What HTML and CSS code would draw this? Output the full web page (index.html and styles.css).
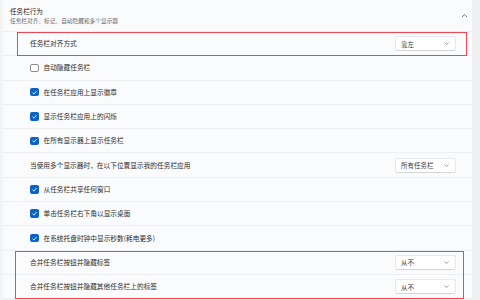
FILE: index.html
```html
<!DOCTYPE html>
<html lang="zh-CN">
<head>
<meta charset="utf-8">
<link rel="stylesheet" href="styles.css">
</head>
<body>
<div class="page">
  <div class="panel">
    <div class="header">
      <div class="htext">
        <div class="title">任务栏行为</div>
        <div class="sub">任务栏对齐、标记、自动隐藏和多个显示器</div>
      </div>
      <svg class="chev-up" width="7" height="5" viewBox="0 0 7 5"><path d="M1 4 L3.5 1.5 L6 4" fill="none" stroke="#555" stroke-width="0.8"/></svg>
    </div>
    <div class="row"><span class="label">任务栏对齐方式</span><div class="select"><span>靠左</span><svg class="chev" width="5" height="3" viewBox="0 0 5 3"><path d="M0.5 0.5 L2.5 2.5 L4.5 0.5" fill="none" stroke="#777" stroke-width="0.7"/></svg></div></div>
    <div class="row"><span class="cb"></span><span class="label">自动隐藏任务栏</span></div>
    <div class="row"><span class="cb on"><svg width="7" height="7" viewBox="0 0 7 7"><path d="M1.5 3.7 L3 5.1 L5.6 2" fill="none" stroke="#fff" stroke-width="0.8"/></svg></span><span class="label">在任务栏应用上显示徽章</span></div>
    <div class="row"><span class="cb on"><svg width="7" height="7" viewBox="0 0 7 7"><path d="M1.5 3.7 L3 5.1 L5.6 2" fill="none" stroke="#fff" stroke-width="0.8"/></svg></span><span class="label">显示任务栏应用上的闪烁</span></div>
    <div class="row"><span class="cb on"><svg width="7" height="7" viewBox="0 0 7 7"><path d="M1.5 3.7 L3 5.1 L5.6 2" fill="none" stroke="#fff" stroke-width="0.8"/></svg></span><span class="label">在所有显示器上显示任务栏</span></div>
    <div class="row"><span class="label">当使用多个显示器时，在以下位置显示我的任务栏应用</span><div class="select"><span>所有任务栏</span><svg class="chev" width="5" height="3" viewBox="0 0 5 3"><path d="M0.5 0.5 L2.5 2.5 L4.5 0.5" fill="none" stroke="#777" stroke-width="0.7"/></svg></div></div>
    <div class="row"><span class="cb on"><svg width="7" height="7" viewBox="0 0 7 7"><path d="M1.5 3.7 L3 5.1 L5.6 2" fill="none" stroke="#fff" stroke-width="0.8"/></svg></span><span class="label">从任务栏共享任何窗口</span></div>
    <div class="row"><span class="cb on"><svg width="7" height="7" viewBox="0 0 7 7"><path d="M1.5 3.7 L3 5.1 L5.6 2" fill="none" stroke="#fff" stroke-width="0.8"/></svg></span><span class="label">单击任务栏右下角以显示桌面</span></div>
    <div class="row"><span class="cb on"><svg width="7" height="7" viewBox="0 0 7 7"><path d="M1.5 3.7 L3 5.1 L5.6 2" fill="none" stroke="#fff" stroke-width="0.8"/></svg></span><span class="label">在系统托盘时钟中显示秒数(耗电更多)</span></div>
    <div class="row"><span class="label">合并任务栏按钮并隐藏标签</span><div class="select"><span>从不</span><svg class="chev" width="5" height="3" viewBox="0 0 5 3"><path d="M0.5 0.5 L2.5 2.5 L4.5 0.5" fill="none" stroke="#777" stroke-width="0.7"/></svg></div></div>
    <div class="row"><span class="label">合并任务栏按钮并隐藏其他任务栏上的标签</span><div class="select"><span>从不</span><svg class="chev" width="5" height="3" viewBox="0 0 5 3"><path d="M0.5 0.5 L2.5 2.5 L4.5 0.5" fill="none" stroke="#777" stroke-width="0.7"/></svg></div></div>
  </div>
  <div class="scroll"></div>
</div>
<div class="mark mark1"></div>
<div class="mark mark2"></div>
</body>
</html>
```

FILE: styles.css
```css
html, body {
  margin: 0;
  padding: 0;
}
body {
  width: 480px;
  height: 300px;
  overflow: hidden;
  background: #f3f4f6;
  font-family: "Noto Sans CJK SC", "Noto Sans", sans-serif;
  color: #2a2a2a;
  position: relative;
}
.page {
  display: flex;
  height: 300px;
}
.panel {
  flex: 1;
  margin-left: 3px;
  display: flex;
  flex-direction: column;
  gap: 1px;
  background: #eeeff1;
}
.scroll {
  width: 8px;
  background: #eff0f2;
}
.header {
  height: 31px;
  flex: none;
  background: #fafbfc;
  display: flex;
  align-items: center;
  justify-content: space-between;
  padding: 0 4px 0 7px;
}
.htext {
  display: flex;
  flex-direction: column;
  margin-top: 1px;
}
.title {
  font-size: 6.6px;
  line-height: 9.5px;
  color: #222;
}
.sub {
  font-size: 5.7px;
  line-height: 8px;
  color: #6a6a6a;
}
.row {
  height: 23.3px;
  flex: none;
  background: #fafbfc;
  display: flex;
  align-items: center;
  padding: 0 16px 0 27px;
}
.label {
  font-size: 6.7px;
  line-height: 9px;
  color: #2c2c2c;
}
.cb {
  width: 8.5px;
  height: 8.5px;
  box-sizing: border-box;
  border: 0.7px solid #8e8e8e;
  border-radius: 2px;
  background: #fdfdfd;
  margin-right: 5px;
  display: flex;
  align-items: center;
  justify-content: center;
  flex: none;
}
.cb.on {
  border: none;
  background: #0b63c8;
}
.select {
  margin-left: auto;
  width: 61px;
  height: 15px;
  box-sizing: border-box;
  background: #ffffff;
  border: 0.5px solid #e8e8ea;
  border-bottom-color: #d6d6d8;
  border-radius: 2.5px;
  display: flex;
  align-items: center;
  justify-content: space-between;
  padding: 0 6px 0 5px;
  font-size: 6.5px;
  color: #3a3a3a;
}
.mark {
  position: absolute;
  border: 1.5px solid #f1464f;
  box-sizing: border-box;
}
.mark1 {
  left: 17px;
  top: 32px;
  width: 450px;
  height: 24px;
}
.mark2 {
  left: 15px;
  top: 251px;
  width: 449px;
  height: 48px;
}
```
